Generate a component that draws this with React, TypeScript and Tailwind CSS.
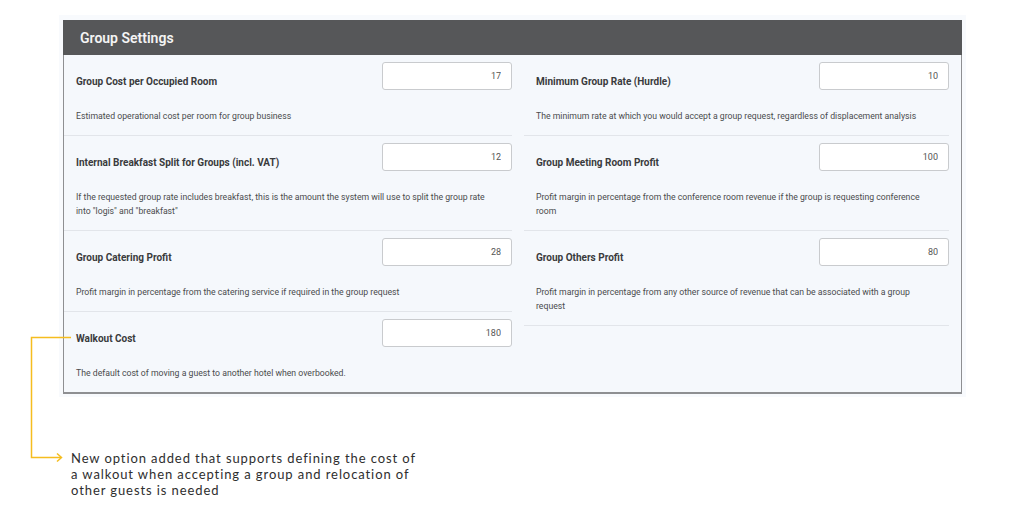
type Setting = {
  label: string;
  value: string;
  description: string;
};

const leftSettings: Setting[] = [
  {
    label: 'Group Cost per Occupied Room',
    value: '17',
    description: 'Estimated operational cost per room for group business',
  },
  {
    label: 'Internal Breakfast Split for Groups (incl. VAT)',
    value: '12',
    description:
      'If the requested group rate includes breakfast, this is the amount the system will use to split the group rate into "logis" and "breakfast"',
  },
  {
    label: 'Group Catering Profit',
    value: '28',
    description: 'Profit margin in percentage from the catering service if required in the group request',
  },
  {
    label: 'Walkout Cost',
    value: '180',
    description: 'The default cost of moving a guest to another hotel when overbooked.',
  },
];

const rightSettings: Setting[] = [
  {
    label: 'Minimum Group Rate (Hurdle)',
    value: '10',
    description: 'The minimum rate at which you would accept a group request, regardless of displacement analysis',
  },
  {
    label: 'Group Meeting Room Profit',
    value: '100',
    description: 'Profit margin in percentage from the conference room revenue if the group is requesting conference room',
  },
  {
    label: 'Group Others Profit',
    value: '80',
    description: 'Profit margin in percentage from any other source of revenue that can be associated with a group request',
  },
];

function SettingRow({setting, last}: {setting: Setting; last?: boolean}) {
  return (
    <div className={`pl-[12px] pt-[7px] pb-[12px] ${last ? '' : 'border-b border-[#e2e5ea]'}`}>
      <div className="flex items-start justify-between">
        <span className="mt-[13px] text-[10px] leading-[14px] font-bold text-[#3a3b3d]">{setting.label}</span>
        <input
          readOnly
          value={setting.value}
          className="h-[28px] w-[130px] rounded-[3px] border border-[#c9cbce] bg-white pr-[10px] text-right text-[9px] text-[#555] outline-none"
        />
      </div>
      <p className="mt-[19px] pr-[20px] text-[8.7px] leading-[14px] text-[#4a4b4d]">{setting.description}</p>
    </div>
  );
}

export default function App() {
  return (
    <div className="relative min-h-[516px] bg-white pt-[15px] pl-[59px]" style={{fontFamily: 'Roboto, "Liberation Sans", sans-serif'}}>
      <div className="w-[907px] bg-[#f8fafd] pt-[5px] pb-[3px] pl-[4px]">
        <div className="w-[899px]">
          <div className="flex h-[35px] items-center bg-[#565759] pl-[17px] pt-[2px]">
            <h2 className="text-[14px] font-semibold text-[#f4f4f4]">Group Settings</h2>
          </div>
          <div className="flex gap-[12px] border-x border-b-2 border-[#8e8f92] bg-[#f5f8fc] pr-[12px]">
            <div className="w-[448px]">
              {leftSettings.map((s, i) => (
                <SettingRow key={s.label} setting={s} last={i === leftSettings.length - 1} />
              ))}
            </div>
            <div className="w-[425px]">
              {rightSettings.map((s) => (
                <SettingRow key={s.label} setting={s} />
              ))}
            </div>
          </div>
        </div>
      </div>

      <p
        className="mt-[53px] ml-[12px] text-[13px] leading-[16px] tracking-[0.07em] text-[#2e2e2e]"
        style={{fontFamily: 'Lato, "Open Sans", "Liberation Sans", sans-serif'}}
      >
        New option added that supports defining the cost of
        <br />
        a walkout when accepting a group and relocation of
        <br />
        other guests is needed
      </p>

      {/* annotation connector */}
      <svg className="pointer-events-none absolute top-0 left-0" width="1024" height="516" viewBox="0 0 1024 516">
        <polyline points="71,337.5 31.5,337.5 31.5,457.5 61,457.5" fill="none" stroke="#f5bd1f" strokeWidth="1.5" />
        <polyline points="57,453.5 61.5,457.5 57,461.5" fill="none" stroke="#f5bd1f" strokeWidth="1.5" />
      </svg>
    </div>
  );
}
